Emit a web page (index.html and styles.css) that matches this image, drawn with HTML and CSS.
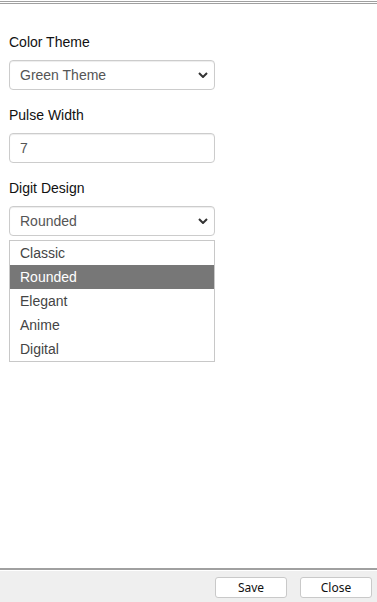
FILE: index.html
```html
<!DOCTYPE html>
<html lang="en">
<head>
    <meta charset="UTF-8">
    <meta name="viewport" content="width=device-width, initial-scale=1.0">
    <title>Settings</title>
    <link rel="stylesheet" href="styles.css">
</head>
<body>
    <div class="dialog">
        <div class="top-rule"></div>

        <div class="settings">
            <div class="form-group">
                <label class="form-label">Color Theme</label>
                <div class="select-box">
                    <span class="select-value">Green Theme</span>
                    <svg class="chevron" width="10" height="6" viewBox="0 0 10 6"><path d="M1 1 L5 5 L9 1" fill="none" stroke="#333" stroke-width="2"/></svg>
                </div>
            </div>

            <div class="form-group">
                <label class="form-label">Pulse Width</label>
                <div class="text-input">7</div>
            </div>

            <div class="form-group">
                <label class="form-label">Digit Design</label>
                <div class="select-box">
                    <span class="select-value">Rounded</span>
                    <svg class="chevron" width="10" height="6" viewBox="0 0 10 6"><path d="M1 1 L5 5 L9 1" fill="none" stroke="#333" stroke-width="2"/></svg>
                </div>
                <ul class="option-list">
                    <li class="option">Classic</li>
                    <li class="option selected">Rounded</li>
                    <li class="option">Elegant</li>
                    <li class="option">Anime</li>
                    <li class="option">Digital</li>
                </ul>
            </div>
        </div>

        <div class="footer">
            <div class="footer-inner">
                <button class="button">Save</button>
                <button class="button">Close</button>
            </div>
        </div>
    </div>
</body>
</html>
```

FILE: styles.css
```css
body {
    margin: 0;
    font-family: "Liberation Sans", Arial, sans-serif;
    font-size: 14px;
    background: #fff;
}

.dialog {
    height: 602px;
    display: flex;
    flex-direction: column;
}

.top-rule {
    height: 1px;
    margin-top: 1px;
    border-top: 1px solid #a0a0a0;
    border-bottom: 1px solid #a0a0a0;
}

.settings {
    flex: 1;
    padding: 28px 0 0 9px;
}

.form-group {
    width: 206px;
    margin-bottom: 15px;
}

.form-label {
    display: block;
    height: 20px;
    line-height: 20px;
    margin-bottom: 8px;
    color: #111;
}

.select-box,
.text-input {
    box-sizing: border-box;
    height: 30px;
    padding: 0 10px;
    border: 1px solid #ccc;
    border-radius: 4px;
    box-shadow: inset 0 1px 1px rgba(0,0,0,0.075);
    color: #555;
    line-height: 28px;
}

.select-box {
    display: flex;
    align-items: center;
    justify-content: space-between;
    padding-right: 6px;
}

.chevron {
    display: block;
}

.option-list {
    list-style: none;
    margin: 4px 0 0;
    padding: 0;
    border: 1px solid #c8c8c8;
}

.option {
    height: 24px;
    line-height: 24px;
    padding: 0 10px;
    color: #444;
}

.option.selected {
    background: #777;
    color: #fff;
}

.footer {
    border-top: 2px solid #a0a0a0;
}

.footer-inner {
    border-top: 1px solid #fff;
    background: #efefef;
    height: 32px;
    box-sizing: border-box;
    padding: 6px 5px 0 0;
    display: flex;
    justify-content: flex-end;
    gap: 13px;
}

.button {
    width: 72px;
    height: 21px;
    padding: 0;
    background: #fff;
    border: 1px solid #c9c9c9;
    border-radius: 3px;
    font-family: "Noto Sans", "Open Sans", sans-serif;
    font-size: 12px;
    color: #111;
    cursor: pointer;
}
```
